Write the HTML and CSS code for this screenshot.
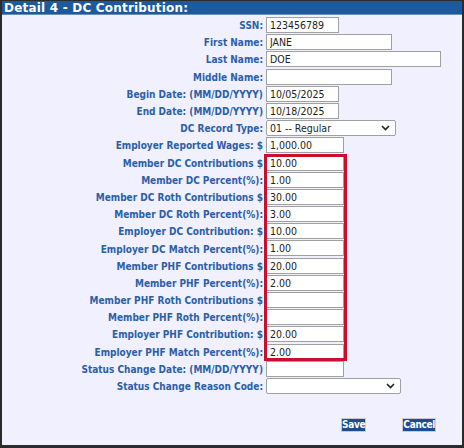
FILE: index.html
```html
<!DOCTYPE html>
<html lang="en">
<head>
  <meta charset="UTF-8">
  <title>Detail 4 - DC Contribution</title>
  <link rel="stylesheet" href="styles.css">
</head>
<body>
  <div class="panel">
    <div class="panel-title">Detail 4 - DC Contribution:</div>

    <div class="form-grid">
      <label class="field-label">SSN:</label>
      <div><input class="input w-short" value="123456789"></div>

      <label class="field-label">First Name:</label>
      <div><input class="input w-mid" value="JANE"></div>

      <label class="field-label">Last Name:</label>
      <div><input class="input w-long" value="DOE"></div>

      <label class="field-label">Middle Name:</label>
      <div><input class="input w-mid" value=""></div>

      <label class="field-label">Begin Date: (MM/DD/YYYY)</label>
      <div><input class="input w-short" value="10/05/2025"></div>

      <label class="field-label">End Date: (MM/DD/YYYY)</label>
      <div><input class="input w-short" value="10/18/2025"></div>

      <label class="field-label">DC Record Type:</label>
      <div class="select-wrap w-select">
        <select class="select"><option>01 -- Regular</option></select>
        <svg class="chevron" width="9" height="6" viewBox="0 0 9 6"><path d="M1 1l3.5 3.5L8 1" fill="none" stroke="#222" stroke-width="1.6"/></svg>
      </div>

      <label class="field-label">Employer Reported Wages: $</label>
      <div><input class="input w-amount" value="1,000.00"></div>

      <label class="field-label">Member DC Contributions $</label>
      <div><input class="input w-amount" value="10.00"></div>

      <label class="field-label">Member DC Percent(%):</label>
      <div><input class="input w-amount" value="1.00"></div>

      <label class="field-label">Member DC Roth Contributions $</label>
      <div><input class="input w-amount" value="30.00"></div>

      <label class="field-label">Member DC Roth Percent(%):</label>
      <div><input class="input w-amount" value="3.00"></div>

      <label class="field-label">Employer DC Contribution: $</label>
      <div><input class="input w-amount" value="10.00"></div>

      <label class="field-label">Employer DC Match Percent(%):</label>
      <div><input class="input w-amount" value="1.00"></div>

      <label class="field-label">Member PHF Contributions $</label>
      <div><input class="input w-amount" value="20.00"></div>

      <label class="field-label">Member PHF Percent(%):</label>
      <div><input class="input w-amount" value="2.00"></div>

      <label class="field-label">Member PHF Roth Contributions $</label>
      <div><input class="input w-amount" value=""></div>

      <label class="field-label">Member PHF Roth Percent(%):</label>
      <div><input class="input w-amount" value=""></div>

      <label class="field-label">Employer PHF Contribution: $</label>
      <div><input class="input w-amount" value="20.00"></div>

      <label class="field-label">Employer PHF Match Percent(%):</label>
      <div><input class="input w-amount" value="2.00"></div>

      <label class="field-label">Status Change Date: (MM/DD/YYYY)</label>
      <div><input class="input w-amount" value=""></div>

      <label class="field-label">Status Change Reason Code:</label>
      <div class="select-wrap w-select-wide">
        <select class="select"><option></option></select>
        <svg class="chevron" width="9" height="6" viewBox="0 0 9 6"><path d="M1 1l3.5 3.5L8 1" fill="none" stroke="#222" stroke-width="1.6"/></svg>
      </div>
    </div>

    <div class="actions">
      <button class="btn">Save</button>
      <button class="btn">Cancel</button>
    </div>

    <!-- marks the contribution fields -->
    <div class="highlight"></div>
  </div>
</body>
</html>
```

FILE: styles.css
```css
* {
  margin: 0;
  padding: 0;
  box-sizing: border-box;
}

body {
  width: 464px;
  height: 448px;
  overflow: hidden;
  background: #2b2b2b;
}

.panel {
  position: relative;
  width: 464px;
  height: 448px;
  background: #f0f0fe;
  border: 2px solid #2b2b2b;
  border-top-width: 1px;
  border-bottom-width: 3px;
}

.panel-title {
  height: 14px;
  line-height: 14px;
  padding-left: 2px;
  background: #1c5a9c;
  color: #fff;
  font-family: "DejaVu Sans", sans-serif;
  font-weight: bold;
  font-size: 12px;
  letter-spacing: 0.2px;
  border-bottom: 1px solid #6e8fb8;
}

.form-grid {
  display: grid;
  grid-template-columns: 261px auto;
  grid-auto-rows: 17.2px;
  column-gap: 3px;
  padding-top: 2px;
}

.field-label {
  text-align: right;
  align-self: center;
  white-space: nowrap;
  color: #2b5fa6;
  font-family: "DejaVu Sans Condensed", "DejaVu Sans", sans-serif;
  font-weight: bold;
  font-size: 10px;
}

.input, .select {
  display: block;
  height: 16px;
  border: 1px solid #a0a0a0;
  background: #fff;
  color: #222;
  font-family: "DejaVu Sans Condensed", "DejaVu Sans", sans-serif;
  font-size: 10.5px;
  padding: 0 3px;
  outline: none;
}

.w-short { width: 73px; }
.w-mid { width: 126px; }
.w-long { width: 175px; }
.w-amount { width: 78px; }
.w-select { width: 130px; }
.w-select-wide { width: 135px; }

.select-wrap {
  position: relative;
  height: 16px;
}

.select {
  width: 100%;
  appearance: none;
  -webkit-appearance: none;
  border-radius: 2px;
}

.chevron {
  position: absolute;
  right: 6px;
  top: 5px;
}

.actions {
  display: flex;
  gap: 36px;
  padding-left: 339px;
  margin-top: 23px;
}

.btn {
  height: 14px;
  padding: 0;
  background: #1c4d8c;
  color: #fff;
  border: 1px solid #c8c8d4;
  font-family: "DejaVu Sans Condensed", "DejaVu Sans", sans-serif;
  font-weight: bold;
  font-size: 10px;
  line-height: 12px;
  letter-spacing: -0.3px;
}

.highlight {
  position: absolute;
  left: 262px;
  top: 153px;
  width: 83px;
  height: 207px;
  border: 3px solid #c8102e;
  pointer-events: none;
}
```
